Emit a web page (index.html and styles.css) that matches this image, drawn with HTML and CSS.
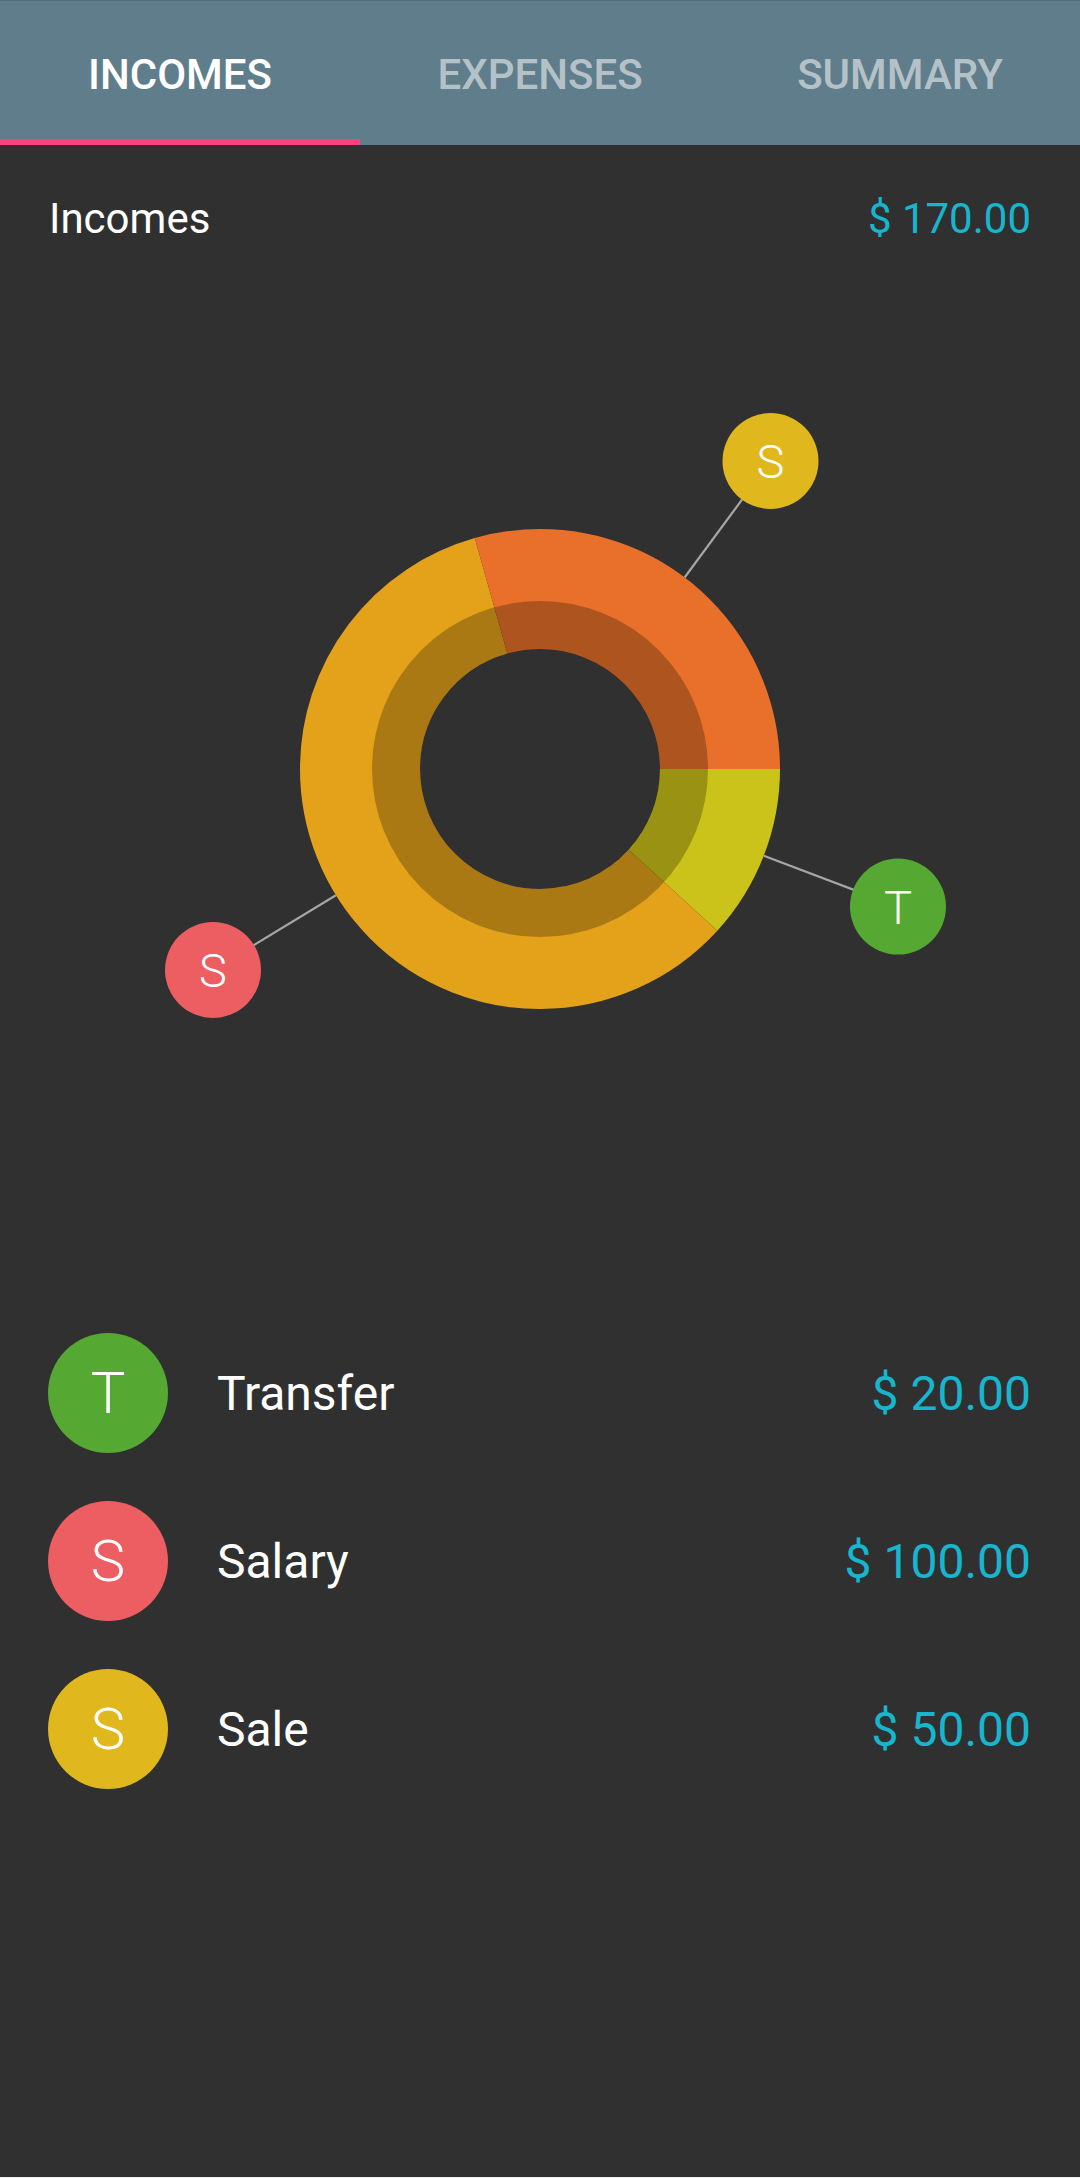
FILE: index.html
```html
<!DOCTYPE html>
<html lang="en">
<head>
<meta charset="utf-8">
<title>Incomes</title>
<link rel="stylesheet" href="styles.css">
</head>
<body>
<div class="app">
  <header class="tabs">
    <div class="tab active">INCOMES</div>
    <div class="tab">EXPENSES</div>
    <div class="tab">SUMMARY</div>
  </header>

  <section class="total">
    <span class="total-label">Incomes</span>
    <span class="amount">$ 170.00</span>
  </section>

  <section class="chart">
    <svg class="chart-svg" width="1080" height="1066" viewBox="0 0 1080 1066">
      <g class="leaders">
        <line x1="684.6" y1="334.5" x2="770.5" y2="218"/>
        <line x1="763.8" y1="612.7" x2="898" y2="663.6"/>
        <line x1="335.9" y1="652.3" x2="213" y2="727"/>
      </g>
      <g>
        <circle class="slice" cx="540" cy="526" r="180" stroke="#CCC31A" stroke-dasharray="133.06 1130.97" stroke-dashoffset="0"/>
        <circle class="slice" cx="540" cy="526" r="180" stroke="#E3A21A" stroke-dasharray="665.28 1130.97" stroke-dashoffset="-133.06"/>
        <circle class="slice" cx="540" cy="526" r="180" stroke="#E8702A" stroke-dasharray="332.64 1130.97" stroke-dashoffset="-798.34"/>
        <circle class="shade" cx="540" cy="526" r="144"/>
      </g>
      <g class="badge">
        <circle cx="770.5" cy="218" r="48" fill="#E0B81E"/>
        <text x="770.5" y="235">S</text>
      </g>
      <g class="badge">
        <circle cx="898" cy="663.6" r="48" fill="#55A832"/>
        <text x="898" y="680.6">T</text>
      </g>
      <g class="badge">
        <circle cx="213" cy="727" r="48" fill="#EC5E62"/>
        <text x="213" y="744">S</text>
      </g>
    </svg>
  </section>

  <ul class="list">
    <li class="row">
      <span class="avatar green">T</span>
      <span class="name">Transfer</span>
      <span class="amount big">$ 20.00</span>
    </li>
    <li class="row">
      <span class="avatar red">S</span>
      <span class="name">Salary</span>
      <span class="amount big">$ 100.00</span>
    </li>
    <li class="row">
      <span class="avatar yellow">S</span>
      <span class="name">Sale</span>
      <span class="amount big">$ 50.00</span>
    </li>
  </ul>
</div>
</body>
</html>
```

FILE: styles.css
```css
html, body {
  margin: 0;
  padding: 0;
  background: #303030;
}

body {
  font-family: Roboto, "Noto Sans", "Liberation Sans", sans-serif;
  color: #ffffff;
}

.app {
  height: 2178px;
  box-sizing: border-box;
  border-bottom: 1px solid #eeeeee;
  display: flex;
  flex-direction: column;
}

.tabs {
  display: flex;
  background: #607D8B;
  border-top: 1px solid #536D79;
  height: 144px;
}

.tab {
  flex: 1;
  display: flex;
  align-items: center;
  justify-content: center;
  font-size: 42px;
  font-weight: 500;
  color: rgba(255, 255, 255, 0.55);
  box-sizing: border-box;
  padding-top: 2px;
}

.tab.active {
  color: #ffffff;
  border-bottom: 6px solid #FF4081;
  padding-top: 8px;
}

.total {
  display: flex;
  justify-content: space-between;
  align-items: center;
  padding: 50px 49px 0 49px;
  height: 48px;
  line-height: 48px;
  font-size: 42px;
}

.amount {
  color: #17B6CF;
}

.chart {
  height: 1066px;
}

.chart-svg {
  display: block;
}

.leaders line {
  stroke: #a6a6a6;
  stroke-width: 2.2;
}

.slice {
  fill: none;
  stroke-width: 120;
}

.shade {
  fill: none;
  stroke: rgba(0, 0, 0, 0.25);
  stroke-width: 48;
}

.badge text {
  fill: #ffffff;
  font-family: Roboto, "Noto Sans", sans-serif;
  font-weight: 300;
  font-size: 47px;
  text-anchor: middle;
}

.list {
  list-style: none;
  margin: 0;
  padding: 0 49px 0 48px;
}

.row {
  display: flex;
  align-items: center;
  height: 168px;
}

.avatar {
  width: 120px;
  height: 120px;
  border-radius: 50%;
  display: flex;
  align-items: center;
  justify-content: center;
  font-size: 58px;
  font-weight: 300;
  color: #ffffff;
  flex-shrink: 0;
}

.avatar.green { background: #55A832; }
.avatar.red { background: #EC5E62; }
.avatar.yellow { background: #E0B81E; }

.name {
  flex: 1;
  margin-left: 49px;
  font-size: 48px;
}

.amount.big {
  font-size: 48px;
}
```
